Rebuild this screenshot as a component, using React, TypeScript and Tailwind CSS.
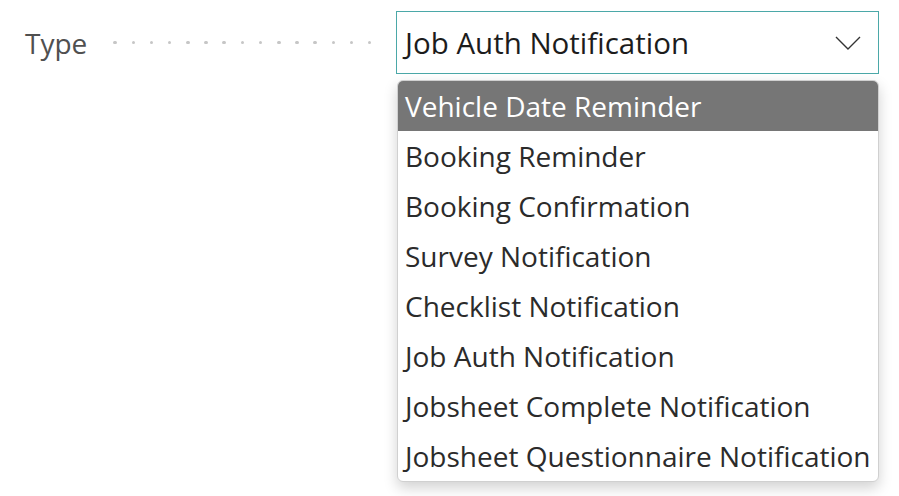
import React from 'react';

const options = [
  'Vehicle Date Reminder',
  'Booking Reminder',
  'Booking Confirmation',
  'Survey Notification',
  'Checklist Notification',
  'Job Auth Notification',
  'Jobsheet Complete Notification',
  'Jobsheet Questionnaire Notification',
];

const App: React.FC = () => {
  const active = 0;

  return (
    <div className="w-[899px] h-[496px] bg-white font-['Open_Sans',sans-serif] overflow-hidden">
      <div className="flex items-start pt-[11px]">
        {/* Label + leader dots */}
        <div className="flex items-center h-[63px] pl-[25px] w-[396px] shrink-0">
          <span className="text-[28px] text-[#505050] leading-none">Type</span>
          <div className="flex items-center gap-[14.7px] ml-[26px]">
            {Array.from({ length: 15 }).map((_, i) => (
              <span key={i} className="block w-[3.5px] h-[3.5px] rounded-full bg-[#c6c6c6]" />
            ))}
          </div>
        </div>

        <div className="flex flex-col w-[483px]">
          {/* Select */}
          <div className="flex items-center justify-between h-[63px] border border-[#4ba8a8] pl-[8px] pr-[16px]">
            <span className="text-[29.5px] text-[#1c1c1c] leading-none">Job Auth Notification</span>
            <svg width="28" height="16" viewBox="0 0 28 16" fill="none">
              <path d="M2 2 L14 14 L26 2" stroke="#333" strokeWidth="1.4" />
            </svg>
          </div>

          {/* Dropdown list */}
          <div className="mt-[6px] ml-[1px] rounded-[6px] border border-[#d0d0d0] bg-white shadow-[0_6px_14px_rgba(0,0,0,0.18)] overflow-hidden">
            {options.map((o, i) => (
              <div
                key={o}
                className={`flex items-center h-[50px] pl-[7px] text-[28px] leading-none ${
                  i === active ? 'bg-[#767676] text-white' : 'text-[#2b2b2b]'
                }`}
              >
                {o}
              </div>
            ))}
          </div>
        </div>
      </div>
    </div>
  );
};

export default App;
